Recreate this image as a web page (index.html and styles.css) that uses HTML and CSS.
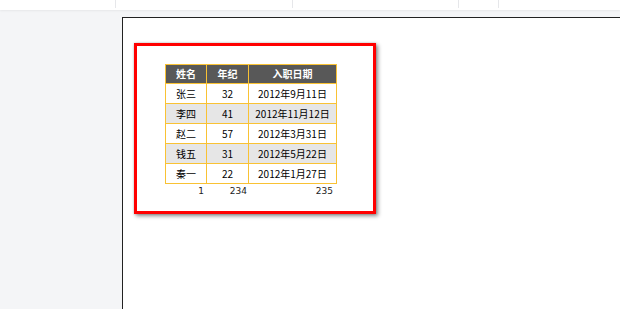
FILE: index.html
```html
<!DOCTYPE html>
<html>
<head>
<meta charset="utf-8">
<link rel="stylesheet" href="styles.css">
</head>
<body>
<div class="topbar">
  <div class="seg s1"></div>
  <div class="seg s2"></div>
  <div class="seg s3"></div>
  <div class="seg s4"></div>
  <div class="seg s5"></div>
</div>
<div class="main">
  <div class="sidebar"></div>
  <div class="page">
    <div class="shot">
      <table class="sheet">
        <thead>
          <tr><th class="c1">姓名</th><th class="c2">年纪</th><th class="c3">入职日期</th></tr>
        </thead>
        <tbody>
          <tr><td>张三</td><td>32</td><td>2012年9月11日</td></tr>
          <tr class="alt"><td>李四</td><td>41</td><td>2012年11月12日</td></tr>
          <tr><td>赵二</td><td>57</td><td>2012年3月31日</td></tr>
          <tr class="alt"><td>钱五</td><td>31</td><td>2012年5月22日</td></tr>
          <tr><td>秦一</td><td>22</td><td>2012年1月27日</td></tr>
        </tbody>
      </table>
      <div class="foot">
        <span class="f1">1</span><span class="f2">234</span><span class="f3">235</span>
      </div>
    </div>
  </div>
</div>
</body>
</html>
```

FILE: styles.css
```css
html, body {
  margin: 0;
  padding: 0;
}
body {
  width: 620px;
  height: 309px;
  overflow: hidden;
  background: #f4f5f7;
  font-family: "Noto Sans CJK SC", "Noto Sans", sans-serif;
}
.topbar {
  height: 10px;
  background: #ffffff;
  display: flex;
  box-shadow: 0 1px 2px rgba(0,0,0,0.06);
}
.seg {
  height: 8px;
  border-right: 1px solid #e6e7ea;
}
.s1 { width: 115px; }
.s2 { width: 176px; }
.s3 { width: 165px; }
.s4 { width: 39px; }
.s5 { flex: 1; border-right: none; }
.main {
  display: flex;
  padding-top: 7px;
  height: 292px;
}
.sidebar {
  width: 122px;
  flex: none;
}
.page {
  flex: 1;
  background: #ffffff;
  border-top: 1px solid #222222;
  border-left: 1px solid #222222;
  padding: 25px 0 0 11px;
}
.shot {
  width: 236px;
  height: 165px;
  box-sizing: content-box;
  border: 3px solid #ff0000;
  box-shadow: 2px 2px 4px rgba(0,0,0,0.45), 0 0 2px rgba(0,0,0,0.2);
  padding: 0;
  position: relative;
}
.sheet {
  margin: 18px 0 0 28px;
  border-collapse: collapse;
  font-size: 10px;
  color: #000000;
}
.sheet th, .sheet td {
  border: 1px solid #f9c234;
  padding: 0;
  text-align: center;
  line-height: 12px;
}
.sheet th {
  background: #585858;
  color: #ffffff;
  font-weight: bold;
  height: 18px;
}
.sheet td {
  height: 19px;
}
.c1 { width: 40px; }
.c2 { width: 41px; }
.c3 { width: 87px; }
.alt td { background: #e6e6e6; }
.foot {
  display: flex;
  margin-left: 28px;
  font-family: "DejaVu Sans", sans-serif;
  font-size: 9px;
  line-height: 12px;
  color: #222222;
  padding-top: 1px;
}
.foot span {
  text-align: right;
  display: block;
}
.f1 { width: 39px; }
.f2 { width: 43px; }
.f3 { width: 86px; }
```
